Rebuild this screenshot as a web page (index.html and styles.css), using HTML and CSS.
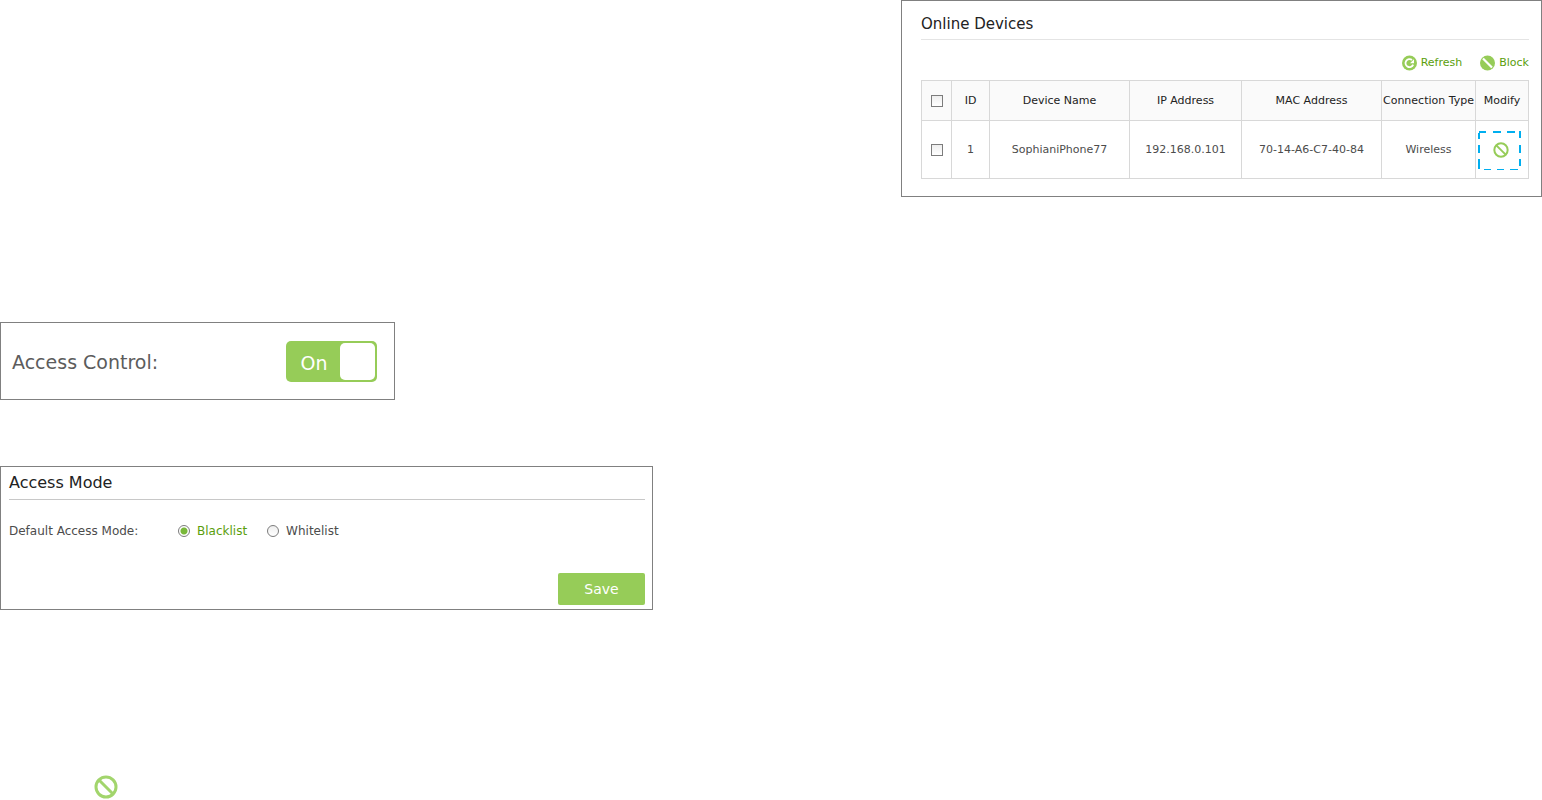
FILE: index.html
```html
<!DOCTYPE html>
<html lang="en">

<head>
  <meta charset="UTF-8" />
  <meta name="viewport" content="width=device-width, initial-scale=1.0" />
  <title>Access Control</title>
  <link rel="stylesheet" href="styles.css">
</head>

<body>
  <main class="page">
    <section class="panel devices">
      <h2>Online Devices</h2>
      <div class="toolbar">
        <button type="button" class="tool">
          <svg width="16" height="16" viewBox="0 0 16 16" aria-hidden="true">
            <circle cx="8.5" cy="8" r="7.5" fill="#96cc58" />
            <path d="M11 5A4 4 0 1 0 12.2 9.6" fill="none" stroke="#fff" stroke-width="1.8" />
            <path d="M13 4.2v4H9z" fill="#fff" />
          </svg>
          Refresh
        </button>
        <button type="button" class="tool">
          <svg width="16" height="16" viewBox="0 0 16 16" aria-hidden="true">
            <circle cx="8.5" cy="8" r="7.5" fill="#96cc58" />
            <path d="M4 3.5l9 9" stroke="#fff" stroke-width="2.2" />
          </svg>
          Block
        </button>
      </div>
      <table>
        <colgroup>
          <col class="col-check">
          <col class="col-id">
          <col class="col-wide">
          <col class="col-ip">
          <col class="col-wide">
          <col class="col-type">
          <col class="col-modify">
        </colgroup>
        <thead>
          <tr>
            <th><input type="checkbox" aria-label="Select all devices"></th>
            <th>ID</th>
            <th>Device Name</th>
            <th>IP Address</th>
            <th>MAC Address</th>
            <th>Connection Type</th>
            <th>Modify</th>
          </tr>
        </thead>
        <tbody>
          <tr>
            <td><input type="checkbox" aria-label="Select SophianiPhone77"></td>
            <td>1</td>
            <td>SophianiPhone77</td>
            <td>192.168.0.101</td>
            <td>70-14-A6-C7-40-84</td>
            <td>Wireless</td>
            <td>
              <button type="button" class="block" aria-label="Block device">
                <svg class="outline" viewBox="0 0 43 40" aria-hidden="true">
                  <path d="M1 2h7M15 2h8M29 2h8M41 2h2" />
                  <path d="M6 39.5h7M19 39.5h7M32 39.5h8" stroke-width="1" />
                  <path d="M42 1v7M42 15v8M42 29v7" />
                  <path d="M1 3v6M1 15v8M1 29v10" />
                </svg>
                <svg width="16" height="16" viewBox="0 0 24 24" aria-hidden="true">
                  <circle cx="12" cy="12" r="10" fill="none" stroke="#96cc58" stroke-width="3" />
                  <path d="M5 5l14 14" stroke="#96cc58" stroke-width="3" />
                </svg>
              </button>
            </td>
          </tr>
        </tbody>
      </table>
    </section>

    <section class="panel control">
      <label for="access-control">Access Control:</label>
      <span class="switch">
        <input type="checkbox" id="access-control" role="switch" checked>
        <span class="state">On</span>
        <span class="knob"></span>
      </span>
    </section>

    <section class="panel mode">
      <h2>Access Mode</h2>
      <form>
        <div class="field" role="radiogroup" aria-labelledby="mode-label">
          <span class="name" id="mode-label">Default Access Mode:</span>
          <label><input type="radio" name="mode" checked> <span>Blacklist</span></label>
          <label><input type="radio" name="mode"> <span>Whitelist</span></label>
        </div>
        <button type="button" class="save">Save</button>
      </form>
    </section>

    <svg class="block-icon" width="24" height="24" viewBox="0 0 24 24" role="img" aria-label="Block">
      <circle cx="12" cy="12" r="10" fill="none" stroke="#a2d56c" stroke-width="3" />
      <path d="M5 5l14 14" stroke="#a2d56c" stroke-width="3" />
    </svg>
  </main>
</body>

</html>
```
FILE: styles.css
```css
* {
  box-sizing: border-box;
}

body {
  margin: 0;
  background: #fff;
  color: #4c4c4c;
  font-family: "DejaVu Sans", Verdana, sans-serif;
  font-size: 12px;
}

button,
input {
  font: inherit;
  margin: 0;
}

button {
  border: none;
  background: none;
  cursor: pointer;
}

.page {
  display: flex;
  flex-direction: column;
  align-items: flex-start;
}

.panel {
  width: 100%;
  border: 1px solid #808080;
}

.panel h2 {
  margin: 0;
  padding-bottom: 5px;
  color: #222;
  font-weight: normal;
  line-height: 20px;
}

/* Online devices */
.devices {
  max-width: 641px;
  margin-left: auto;
  padding: 13px 12px 17px 19px;
}

.devices h2 {
  border-bottom: 1px solid #e4e4e4;
  font-size: 15px;
}

.toolbar {
  display: flex;
  justify-content: flex-end;
  gap: 17px;
  padding: 15px 0 9px;
}

.tool {
  display: flex;
  align-items: center;
  gap: 4px;
  padding: 0;
  color: #5a9e0c;
  font-size: 11px;
  line-height: 16px;
}

table {
  width: 100%;
  border-collapse: collapse;
  table-layout: fixed;
  font-size: 11px;
}

.col-check {
  width: 30px;
}

.col-id {
  width: 38px;
}

.col-wide {
  width: auto;
}

.col-ip {
  width: 112px;
}

.col-type {
  width: 94px;
}

.col-modify {
  width: 53px;
}

th,
td {
  padding: 0;
  border: 1px solid #d8d8d8;
  text-align: center;
  white-space: nowrap;
}

th {
  height: 40px;
  background: #fafafa;
  color: #222;
  font-weight: normal;
}

td {
  height: 58px;
}

table input {
  appearance: none;
  display: block;
  width: 12px;
  height: 12px;
  margin: 0 auto;
  border: 1px solid #7c7c7c;
  background: linear-gradient(#eee, #fff);
}

table input:checked {
  background: #79b83a;
}

.block {
  position: relative;
  display: flex;
  align-items: center;
  justify-content: center;
  width: 43px;
  height: 40px;
  margin: 0 auto 0 2px;
  padding: 0 0 0 3px;
}

.outline {
  position: absolute;
  inset: 0;
  fill: none;
  stroke: #00aeef;
  stroke-width: 2;
}

/* Access control switch */
.control {
  display: flex;
  align-items: center;
  justify-content: space-between;
  max-width: 395px;
  margin-top: 125px;
  padding: 18px 17px 17px 11px;
  color: #5c5c5c;
  font-size: 19px;
}

.control label {
  line-height: 40px;
}

.switch {
  position: relative;
  display: flex;
  width: 91px;
  height: 41px;
  padding: 2px;
  border-radius: 5px;
  background: #96cc58;
  color: #fff;
}

.switch input {
  position: absolute;
  inset: 0;
  width: 100%;
  height: 100%;
  opacity: 0;
  cursor: pointer;
}

.state {
  flex: 1;
  line-height: 40px;
  text-align: center;
}

.knob {
  width: 35px;
  border-radius: 5px;
  background: #fff;
}

/* Access mode */
.mode {
  max-width: 653px;
  margin-top: 66px;
  padding: 6px 7px 4px 8px;
}

.mode h2 {
  padding-bottom: 6px;
  border-bottom: 1px solid #c8c8c8;
  font-size: 16px;
}

.field {
  display: flex;
  align-items: center;
  gap: 20px;
  height: 62px;
}

.field .name {
  width: 149px;
}

.field label {
  display: flex;
  align-items: center;
  gap: 7px;
}

.field input {
  appearance: none;
  width: 12px;
  height: 12px;
  border: 1px solid #7c7c7c;
  border-radius: 50%;
  background: linear-gradient(#eee, #fff);
}

.field input:checked {
  background: radial-gradient(circle, #79b83a 3px, #fff 4px);
}

.field input:checked + span {
  color: #5a9e0c;
}

.save {
  display: block;
  width: 87px;
  height: 32px;
  margin: 11px 0 0 auto;
  border-radius: 2px;
  background: #96cc58;
  color: #fff;
  font-size: 14px;
}

.block-icon {
  margin: 165px 0 0 94px;
}
```
